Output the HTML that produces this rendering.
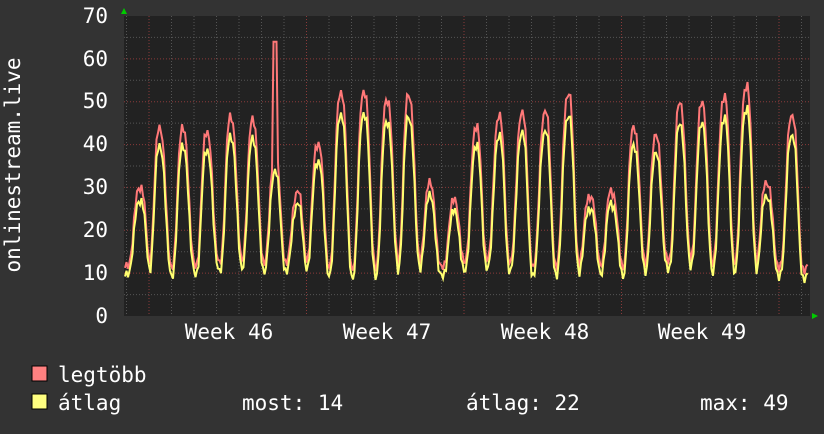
<!DOCTYPE html>
<html><head><meta charset="utf-8"><style>
html,body{margin:0;padding:0;background:#333;}
body{width:824px;height:430px;overflow:hidden;font-family:"DejaVu Sans Mono","Liberation Mono",monospace;color:#fff;}
svg text{font-family:"DejaVu Sans Mono","Liberation Mono",monospace;fill:#fff;}
</style></head><body>
<svg id="g" width="824" height="430" xmlns="http://www.w3.org/2000/svg">
<rect x="0" y="0" width="824" height="430" fill="#333"/>
<rect x="124" y="16" width="686" height="300" fill="#222"/>
<g id="grid"></g>
<path id="pmax" fill="none" stroke="#ff7878" stroke-width="2"/>
<path id="pavg" fill="none" stroke="#ffff70" stroke-width="2"/>
<polygon points="121,14 127,14 124,8" fill="#0c0"/>
<polygon points="812,313 812,319 818,316" fill="#0c0"/>
<g font-size="21" text-anchor="end">
<text x="108" y="23">70</text><text x="108" y="66">60</text><text x="108" y="108">50</text>
<text x="108" y="151">40</text><text x="108" y="194">30</text><text x="108" y="237">20</text>
<text x="108" y="280">10</text><text x="108" y="323">0</text>
</g>
<g font-size="21" text-anchor="middle">
<text x="229" y="339">Week 46</text><text x="387" y="339">Week 47</text>
<text x="545" y="339">Week 48</text><text x="702" y="339">Week 49</text>
</g>
<text font-size="21" transform="translate(20,165) rotate(-90)" text-anchor="middle">onlinestream.live</text>
<rect x="32" y="366" width="15" height="15" fill="#ff8080" stroke="#000"/>
<rect x="32" y="394" width="15" height="15" fill="#ffff80" stroke="#000"/>
<g font-size="21">
<text x="58" y="382">legtöbb</text>
<text x="58" y="410">átlag</text>
<text x="242" y="410">most: 14</text>
<text x="466" y="410">átlag: 22</text>
<text x="700" y="410">max: 49</text>
</g>
</svg>
<script>
var ns="http://www.w3.org/2000/svg",g=document.getElementById("grid");
function ln(x1,y1,x2,y2,c){var l=document.createElementNS(ns,"line");l.setAttribute("x1",x1);l.setAttribute("y1",y1);l.setAttribute("x2",x2);l.setAttribute("y2",y2);l.setAttribute("stroke",c);l.setAttribute("stroke-dasharray","1,2");g.appendChild(l);}
for(var v=5;v<70;v+=5){var y=316-v*300/70;ln(124,y,810,y,v%10==0?"#8a3a3a":"#555");}
for(var x=126.5;x<810;x+=22.5){var wk=Math.abs(((x-149)/157.5)-Math.round((x-149)/157.5))<0.01;ln(x,16,x,316,wk?"#8a3a3a":"#555");}
var peaks=[31,43,43,43,47,45,36,29,41,52,52,51,52,30,26,44,47,47,47,52,29,29,43,42,50,49,50,54,32,47];
var cen=[140,160,183,207,231,253,275,297,318,341,364,387,409,430,454,476,499,522,545,568,590,612,634,656,680,702,724,746,767,792];
function val(x,avg){var base=avg?9.5:11.5,best=base;for(var i=0;i<cen.length;i++){var d=(x-cen[i])/6.8;var p=peaks[i]*(avg?0.9:1);var b=base+(p-base)*Math.exp(-Math.pow(Math.abs(d),3));if(b>best)best=b;}
var n=Math.sin(x*1.7)*0.9+Math.sin(x*0.53)*0.7+Math.sin(x*0.21)*0.8;return best+n;}
function path(avg){var s="";for(var x=125;x<=808;x+=1.5){var v=val(x,avg);if(!avg&&Math.abs(x-275)<1.6)v=64;var y=316-v*300/70;s+=(s?"L":"M")+x.toFixed(1)+","+y.toFixed(1);}return s;}
document.getElementById("pmax").setAttribute("d",path(false));
document.getElementById("pavg").setAttribute("d",path(true));
</script>
</body></html>
